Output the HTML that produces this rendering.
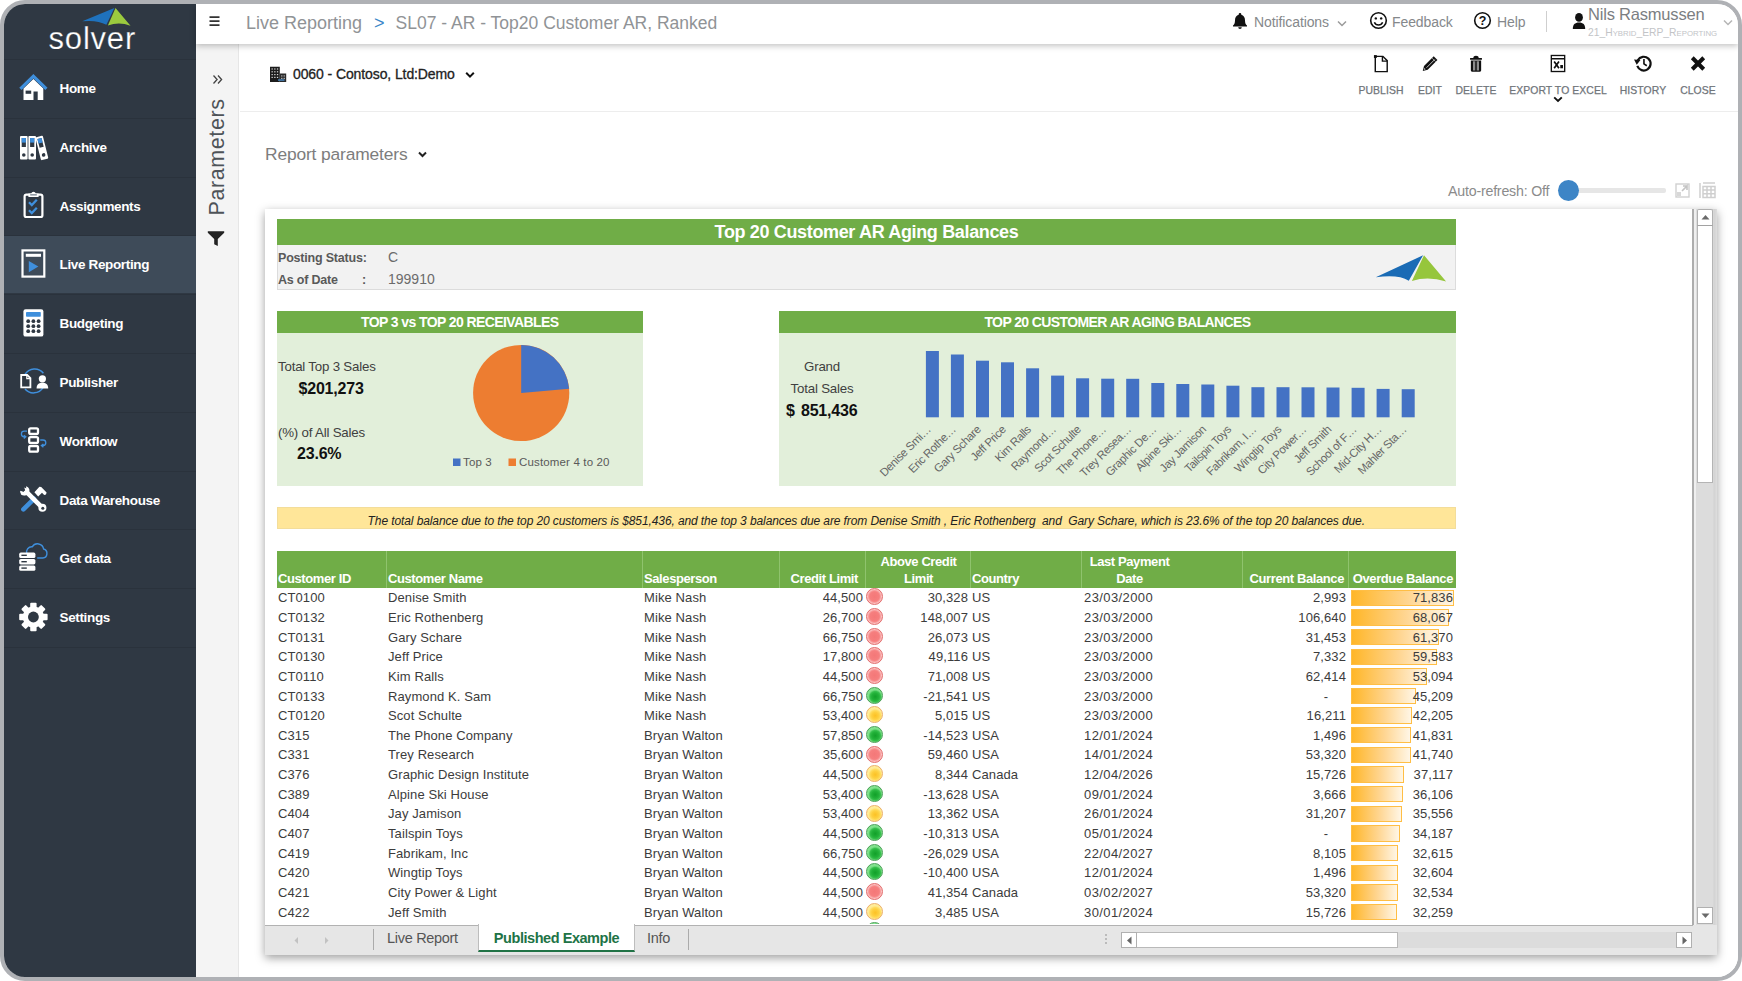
<!DOCTYPE html>
<html lang="en">
<head>
<meta charset="utf-8">
<title>SL07 - AR - Top20 Customer AR, Ranked</title>
<style>
*{box-sizing:border-box;margin:0;padding:0}
html,body{width:1742px;height:981px;overflow:hidden;background:#fff}
body{font-family:"Liberation Sans",sans-serif;position:relative}
#frame{position:absolute;left:0;top:0;width:1742px;height:981px;border:4px solid #afb1b5;border-radius:25px;overflow:hidden;background:#fff}
#app{position:absolute;left:-4px;top:-4px;width:1742px;height:981px}
/* everything inside #app uses full-image coordinates */
#side{position:absolute;left:4px;top:4px;width:192px;height:973px;background:#2f3843}
#logo{position:absolute;left:0;top:0;width:192px;height:55px}
.mi{position:absolute;left:0;width:192px;height:58.8px;border-top:1px solid #2a323c;color:#fff;font-weight:bold;font-size:13.5px;letter-spacing:-0.35px}
.mi span{position:absolute;left:55.5px;top:21px;line-height:16px;white-space:nowrap}
.mi svg{position:absolute;left:13px;top:11.500px;width:32px;height:32px}
.mi.act{background:#3e4b59}
#top{position:absolute;left:196px;top:4px;width:1542px;height:39.500px;background:#fff;box-shadow:0 2px 6px rgba(0,0,0,.24);z-index:5}
#crumb{position:absolute;left:50px;top:8.600px;font-size:18px;line-height:20px;color:#909396;white-space:nowrap;letter-spacing:0px}
#crumb b{font-weight:normal;color:#3a86c8;margin:0 11px 0 12px}
.tnav{position:absolute;top:10px;font-size:14px;letter-spacing:-0.1px;line-height:16px;color:#85888b;white-space:nowrap}
#pstrip{position:absolute;left:196px;top:43px;width:43px;height:934px;background:#f4f4f4;border-right:1px solid #e6e6e6}
#main{position:absolute;left:240px;top:43px;width:1498px;height:934px;background:#fff}
#hr1{position:absolute;left:240px;top:111px;width:1498px;height:1px;background:#ededed}
#company{position:absolute;left:293px;top:66px;font-size:14px;line-height:16px;color:#222;white-space:nowrap;letter-spacing:-0.1px;-webkit-text-stroke:0.3px #222}
.tb{position:absolute;top:84.500px;font-size:10.4px;line-height:12px;color:#70757a;-webkit-text-stroke:0.250px #70757a;white-space:nowrap;transform:translateX(-50%);letter-spacing:0.1px}
.tbi{position:absolute;top:52.800px;width:21px;height:21px;transform:translateX(-50%)}
#rp{position:absolute;left:265px;top:144px;font-size:17.4px;line-height:20px;color:#7d7d7d;white-space:nowrap;letter-spacing:-0.15px}
#ar{position:absolute;left:1448px;top:182.5px;font-size:14.2px;line-height:16px;color:#8b8b8b;white-space:nowrap;letter-spacing:-0.2px}
/* spreadsheet */
#sheet{position:absolute;left:264.500px;top:208.500px;width:1452px;height:746.500px;background:#fff;box-shadow:0 3px 9px rgba(0,0,0,.38)}
#tabs{position:absolute;left:264.500px;top:924.500px;width:1452px;height:30.500px;background:#e6e6e6}
#tabs i{position:absolute;left:0;top:0;width:1428px;height:1.300px;background:#b2b2b2}
.cal{font-family:"Liberation Sans",sans-serif}
#title{position:absolute;left:277px;top:218.600px;width:1179px;height:26.300px;background:#70ad47;color:#fff;font-weight:bold;font-size:18px;line-height:26px;text-align:center;letter-spacing:-0.35px}
#info{position:absolute;left:277px;top:245px;width:1179px;height:45px;background:#f2f2f2;border:1px solid #dcdcdc;border-top:none}
.lbl{position:absolute;font-size:12.5px;line-height:14px;color:#595959;font-weight:bold;white-space:nowrap;letter-spacing:-0.2px}
.val{position:absolute;font-size:14px;line-height:16px;color:#6b6b6b;white-space:nowrap;letter-spacing:0px}
.ph{position:absolute;height:22px;background:#70ad47;color:#fff;font-weight:bold;font-size:14px;line-height:22px;text-align:center;letter-spacing:-0.6px}
.pb{position:absolute;background:#e2efda}
.t13{position:absolute;font-size:13.3px;line-height:15px;color:#404040;white-space:nowrap;letter-spacing:-0.2px}
.t15b{position:absolute;font-size:16px;line-height:18px;color:#111;font-weight:bold;white-space:nowrap;letter-spacing:-0.2px}
#note{position:absolute;left:276.500px;top:507.300px;width:1179.500px;height:22px;background:#ffe699;border:1px solid #f3dd9a;font-style:italic;font-size:12px;line-height:26.500px;color:#222;text-align:center;white-space:nowrap;letter-spacing:-0.1px}
#thead{position:absolute;left:276.500px;top:551px;width:1179.500px;height:37px;background:#70ad47}
.th{margin-left:.5px;position:absolute;color:#fff;font-weight:bold;font-size:13px;line-height:17px;white-space:nowrap;letter-spacing:-0.4px}
.vs{margin-left:.5px;position:absolute;top:0;width:1px;height:37px;background:#8fc36d}
.tr{position:absolute;left:0;width:1742px;height:19.6px}
.c{position:absolute;top:2px;font-size:13px;line-height:16px;color:#3c3c3c;white-space:nowrap;letter-spacing:0.1px}
.n{letter-spacing:0.1px}
.d{letter-spacing:0.4px}
.ra{text-align:right}
.dot{position:absolute;left:866.400px;top:0.200px;width:17px;height:17px;border-radius:50%;border:1.400px solid #999}
.dot.r{background:radial-gradient(circle 8px at 50% 50%,#f47878 0,#f67f7f 60%,#f89a9a 74%,#fcc2c2 88%,#fbb8b8 100%);border-color:#e26c6c}
.dot.g{background:radial-gradient(circle 8px at 55% 58%,#12a029 0,#22b139 45%,#36c04c 66%,#7ade86 84%,#86e592 100%);border-color:#4b9f57}
.dot.y{background:radial-gradient(circle 8px at 55% 58%,#fcc124 0,#fed040 45%,#ffdc5e 66%,#ffea94 84%,#ffee9c 100%);border-color:#ecae68}
.dbar{position:absolute;left:1351px;top:1.300px;height:16.400px;background:linear-gradient(90deg,#ffb628 0%,#ffd590 55%,#fff6e6 100%);border:1px solid #ffbe45}
</style>
</head>
<body>
<div id="frame"><div id="app">

<!-- ============ main area ============ -->
<div id="main"></div>
<div id="pstrip"></div>
<div id="hr1"></div>

<!-- ============ sidebar ============ -->
<div id="side">
<div id="logo">
<svg width="192" height="55" viewBox="0 0 192 55">
<path d="M78.300 17.300L110.400 3.900L102.400 20.800Q93 15.600 78.300 17.300Z" fill="#1f72bd"/>
<path d="M111.500 3.900L126.500 21.800Q115 17.400 103.900 21.600Z" fill="#9bca3e"/>
<text x="88.300" y="45.200" text-anchor="middle" font-family="'Liberation Sans',sans-serif" font-size="31" fill="#fff" letter-spacing="0.800" stroke="#2f3843" stroke-width="0.250">solver</text>
</svg>
</div>
<div class="mi" style="top:55px"><svg viewBox="0 0 32 32"><path d="M6.500 16.600L16.400 7l9.900 9.600V28h-5.600v-8.400h-4.200V28H6.500z" fill="#fff"/><path d="M3.400 16.900L16.400 4.200l13 12.700" stroke="#3f8fdc" stroke-width="3.200" fill="none"/><rect x="8.600" y="18.600" width="5.600" height="3.200" fill="#2f3843"/></svg><span>Home</span></div>
<div class="mi" style="top:113.8px"><svg viewBox="0 0 32 32" style="left:14px;top:12px"><rect x="2" y="5" width="7.600" height="23.600" rx="1" fill="#fff"/><rect x="10.400" y="5" width="7.600" height="23.600" rx="1" fill="#fff"/><rect x="20" y="5.200" width="7.600" height="23.600" rx="1" fill="#fff" transform="rotate(-14 23.700 16.700)"/><rect x="3.700" y="7" width="4.200" height="9" fill="#2f3843"/><rect x="12.100" y="7" width="4.200" height="9" fill="#2f3843"/><rect x="3.700" y="7" width="4.200" height="4.600" fill="#3f8fdc"/><rect x="12.100" y="7" width="4.200" height="4.600" fill="#3f8fdc"/><circle cx="5.800" cy="24" r="1.800" fill="#2f3843"/><circle cx="14.200" cy="24" r="1.800" fill="#2f3843"/><g transform="rotate(-14 23.700 16.700)"><rect x="21.700" y="7.200" width="4.200" height="9" fill="#2f3843"/><rect x="21.700" y="7.200" width="4.200" height="4.600" fill="#3f8fdc"/><circle cx="23.800" cy="24.200" r="1.800" fill="#2f3843"/></g></svg><span>Archive</span></div>
<div class="mi" style="top:172.6px"><svg viewBox="0 0 32 32"><rect x="7.600" y="5.600" width="17.800" height="22.400" rx="1.800" fill="none" stroke="#fff" stroke-width="2.200"/><path d="M11.400 8V4.400h2.800a2.400 2.400 0 0 1 4.600 0h2.800V8z" fill="#fff"/><rect x="13.200" y="5.200" width="6.600" height="1.300" fill="#7a8591"/><path d="M12 13.200l2.800 2.800 5-5.200M12 21.200l2.800 2.800 5-5.200" stroke="#3f8fdc" stroke-width="2.300" fill="none"/></svg><span>Assignments</span></div>
<div class="mi act" style="top:231.4px;height:57.400px"><svg viewBox="0 0 32 32" style="top:11px"><rect x="5.500" y="3.400" width="21.800" height="26.200" fill="none" stroke="#fff" stroke-width="2.200"/><rect x="8.800" y="6.800" width="15.200" height="3" fill="#fff"/><path d="M11.800 14l9.600 5.600-9.600 5.600z" fill="#3f8fdc"/></svg><span>Live Reporting</span></div>
<div class="mi" style="top:290.2px"><svg viewBox="0 0 32 32" style="top:11px"><rect x="6.400" y="3.200" width="20" height="27.400" rx="2.200" fill="#fff"/><rect x="9" y="6" width="14.800" height="4.800" rx=".8" fill="#3f8fdc"/><g fill="#2f3843"><circle cx="11.200" cy="15.200" r="1.900"/><circle cx="16.400" cy="15.200" r="1.900"/><circle cx="21.600" cy="15.200" r="1.900"/><circle cx="11.200" cy="20.200" r="1.900"/><circle cx="16.400" cy="20.200" r="1.900"/><circle cx="21.600" cy="20.200" r="1.900"/><circle cx="11.200" cy="25.200" r="1.900"/><circle cx="16.400" cy="25.200" r="1.900"/><circle cx="21.600" cy="25.200" r="1.900"/></g></svg><span>Budgeting</span></div>
<div class="mi" style="top:349px"><svg viewBox="0 0 32 32" style="top:10.500px;left:13.500px"><path d="M7 9.400a11.200 11.200 0 0 1 18.400-1.200M25 22.600a11.200 11.200 0 0 1-18 1.400" stroke="#3f8fdc" stroke-width="1.500" fill="none"/><path d="M3.200 10h6l3.200 3.200v9.200H3.200z" fill="#2f3843" stroke="#fff" stroke-width="1.800"/><path d="M8.800 10v3.600h3.600" fill="none" stroke="#fff" stroke-width="1.200"/><circle cx="24.400" cy="13.800" r="3.600" fill="#fff"/><path d="M18.600 23.400c0-4.200 2.400-5.600 5.800-5.600s5.800 1.400 5.800 5.600z" fill="#fff"/></svg><span>Publisher</span></div>
<div class="mi" style="top:407.8px"><svg viewBox="0 0 32 32"><g fill="none" stroke="#fff" stroke-width="2.300"><rect x="12.200" y="4.400" width="8.800" height="5.600" rx="1.400"/><rect x="12.200" y="13.200" width="8.800" height="5.600" rx="1.400"/><rect x="12.200" y="22" width="8.800" height="5.600" rx="1.400"/></g><path d="M10 7.200H7.200a2.800 2.800 0 0 0 0 5.600h1.400M6.800 11.200l2 1.600-2 1.600M23.200 16H26a2.800 2.800 0 0 1 0 5.600h-1.400M26.400 20l-2 1.600 2 1.600" stroke="#3f8fdc" stroke-width="1.300" fill="none"/></svg><span>Workflow</span></div>
<div class="mi" style="top:466.600px"><svg viewBox="0 0 32 32"><path d="M6.400 26.400L17 15.800" stroke="#3f8fdc" stroke-width="4.600" stroke-linecap="round"/><path d="M17.400 9.200l5-5.400 1.800.2 5.400 5.400-.6 2.200-1.800.4-2.200-2.200-3.800 3.800z" fill="#fff"/><path d="M9.400 8.800L24 23.400" stroke="#fff" stroke-width="4.600"/><circle cx="25.400" cy="24.800" r="4" fill="#fff"/><circle cx="25.800" cy="25.200" r="1.500" fill="#2f3843"/><path d="M11.600 6.200A5 5 0 0 1 4 11.400l-.6-3.200 2.800 1 2-2-1-2.800z" fill="#fff"/><circle cx="7.600" cy="7.600" r="4" fill="none"/><path d="M3.200 7.800a4.600 4.600 0 0 0 8.400 2.600 4.600 4.600 0 0 0-2.600-7.200l.4 3.400-2.600 2.400z" fill="#fff"/></svg><span>Data Warehouse</span></div>
<div class="mi" style="top:525.400px"><svg viewBox="0 0 32 32"><path d="M9.800 11.600a5.200 5.200 0 0 1 5.400-6.800 6.200 6.200 0 0 1 11.400 2.200 4.600 4.600 0 0 1-.8 9h-5.600" stroke="#3f8fdc" stroke-width="1.400" fill="none"/><g fill="#fff"><rect x="2.200" y="10.600" width="16.200" height="5.400" rx="1.600"/><rect x="2.200" y="17" width="16.200" height="5.400" rx="1.600"/><rect x="2.200" y="23.400" width="16.200" height="5.400" rx="1.600"/></g><g fill="#2f3843"><rect x="4.400" y="12.600" width="5.400" height="1.400"/><rect x="4.400" y="19" width="5.400" height="1.400"/><rect x="4.400" y="25.400" width="5.400" height="1.400"/></g></svg><span>Get data</span></div>
<div class="mi" style="top:584.200px"><svg viewBox="0 0 32 32" style="top:12px"><g transform="translate(16.400 16)"><g fill="#fff"><rect x="-3.200" y="-14.200" width="6.400" height="28.400" rx="1"/><rect x="-3.200" y="-14.200" width="6.400" height="28.400" rx="1" transform="rotate(45)"/><rect x="-3.200" y="-14.200" width="6.400" height="28.400" rx="1" transform="rotate(90)"/><rect x="-3.200" y="-14.200" width="6.400" height="28.400" rx="1" transform="rotate(135)"/><circle r="10.600"/></g><circle r="5.400" fill="#2f3843"/></g></svg><span>Settings</span></div>
<div class="mi" style="top:643px;height:1px"></div>

</div>

<!-- ============ top bar ============ -->
<div id="top">
<svg style="position:absolute;left:13px;top:12px" width="12" height="11" viewBox="0 0 12 11"><path d="M0.5 1.2h10M0.5 5.2h10M0.5 9.2h10" stroke="#333" stroke-width="1.8"/></svg>
<div id="crumb">Live Reporting<b>&gt;</b><span style="font-size:17.500px">SL07 - AR - Top20 Customer AR, Ranked</span></div>
<svg style="position:absolute;left:1036px;top:8px" width="16" height="18" viewBox="0 0 16 18"><path d="M8 1.000a1.300 1.300 0 0 1 1.300 1.300v.5c2.400.7 3.700 2.700 3.700 5.400 0 3 .8 4.300 2 5.400v.9H1v-.9c1.200-1.100 2-2.400 2-5.400 0-2.700 1.300-4.700 3.700-5.400v-.5A1.300 1.300 0 0 1 8 1zM6.200 15.300h3.600a1.800 1.800 0 0 1-3.600 0z" fill="#111"/></svg>
<div class="tnav" style="left:1058px">Notifications</div>
<svg style="position:absolute;left:1141px;top:16px" width="10" height="7" viewBox="0 0 10 7"><path d="M1 1.500l4 4 4-4" stroke="#9a9a9a" stroke-width="1.500" fill="none"/></svg>
<svg style="position:absolute;left:1173px;top:7px" width="19" height="19" viewBox="0 0 19 19"><circle cx="9.500" cy="9.500" r="7.800" fill="none" stroke="#111" stroke-width="1.600"/><circle cx="6.800" cy="7.400" r="1.200" fill="#111"/><circle cx="12.200" cy="7.400" r="1.200" fill="#111"/><path d="M5.400 11.200a4.400 4.400 0 0 0 8.200 0" stroke="#111" stroke-width="1.500" fill="none"/></svg>
<div class="tnav" style="left:1196px">Feedback</div>
<svg style="position:absolute;left:1277px;top:7px" width="19" height="19" viewBox="0 0 19 19"><circle cx="9.500" cy="9.500" r="7.800" fill="none" stroke="#111" stroke-width="1.600"/><text x="9.500" y="14" text-anchor="middle" font-family="'Liberation Sans',sans-serif" font-weight="bold" font-size="12.500" fill="#111">?</text></svg>
<div class="tnav" style="left:1301px">Help</div>
<div style="position:absolute;left:1350px;top:7px;width:1px;height:21px;background:#cfcfcf"></div>
<svg style="position:absolute;left:1376px;top:8px" width="14" height="18" viewBox="0 0 14 18"><ellipse cx="7" cy="5.400" rx="3.900" ry="4.400" fill="#111"/><path d="M.8 17c0-4.600 2-6.600 6.200-6.600s6.200 2 6.200 6.600z" fill="#111"/></svg>
<div style="position:absolute;left:1392px;top:0.300px;font-size:16.5px;line-height:20px;color:#7b7e82;white-space:nowrap;letter-spacing:-0.2px">Nils Rasmussen</div>
<div style="position:absolute;left:1392px;top:22.5px;font-size:10.3px;line-height:12px;color:#c2c4c7;white-space:nowrap;letter-spacing:0px">21_H<span style="font-size:7.800px">YBRID</span>_ERP_R<span style="font-size:7.800px">EPORTING</span></div>
<svg style="position:absolute;left:1527px;top:15px" width="10" height="7" viewBox="0 0 10 7"><path d="M1 1.500l4 4 4-4" stroke="#b5b5b5" stroke-width="1.500" fill="none"/></svg>

</div>

<!-- ============ parameters strip ============ -->
<svg style="position:absolute;left:212px;top:74px" width="11" height="11" viewBox="0 0 11 11"><path d="M1.500 1.500l3.600 4-3.600 4M6 1.500l3.600 4-3.600 4" stroke="#444" stroke-width="1.300" fill="none"/></svg>
<div style="position:absolute;left:217px;top:157px;width:0;height:0"><div style="position:absolute;left:0;top:0;transform:translate(-50%,-50%) rotate(-90deg);font-size:21.500px;line-height:24px;color:#4e5358;white-space:nowrap;letter-spacing:0.600px">Parameters</div></div>
<svg style="position:absolute;left:207px;top:230px" width="18" height="17" viewBox="0 0 18 17"><path d="M.8 1.200h16.400v1.600L10.800 9v7l-3.600-1.800V9L.8 2.800z" fill="#222"/></svg>


<!-- ============ company + toolbar ============ -->
<svg style="position:absolute;left:269px;top:66px" width="18" height="17" viewBox="0 0 18 17"><path d="M1 0.800h9.800V16H1z" fill="#1c1c1c"/><path d="M10.800 7.600h6.400V16h-6.400z" fill="#2a2a2a"/><g fill="#d8d8d8"><rect x="2.500" y="2.400" width="1.300" height="1.200"/><rect x="5.200" y="2.400" width="1.300" height="1.200"/><rect x="7.900" y="2.400" width="1.300" height="1.200"/><rect x="2.500" y="5.200" width="1.300" height="1.200"/><rect x="5.200" y="5.200" width="1.300" height="1.200"/><rect x="7.900" y="5.200" width="1.300" height="1.200"/><rect x="2.500" y="8" width="1.300" height="1.200"/><rect x="5.200" y="8" width="1.300" height="1.200"/><rect x="7.900" y="8" width="1.300" height="1.200"/><rect x="2.500" y="10.800" width="1.300" height="1.200"/><rect x="5.200" y="10.800" width="1.300" height="1.200"/><rect x="7.900" y="10.800" width="1.300" height="1.200"/><rect x="12.200" y="9.400" width="1.200" height="1.100"/><rect x="14.600" y="9.400" width="1.200" height="1.100"/><rect x="12.200" y="11.800" width="1.200" height="1.100"/><rect x="14.600" y="11.800" width="1.200" height="1.100"/></g><rect x="9" y="13.400" width="6.500" height="1.300" fill="#4a90d0"/></svg>
<div id="company">0060 - Contoso, Ltd:Demo</div>
<svg style="position:absolute;left:465px;top:71px" width="10" height="8" viewBox="0 0 10 8"><path d="M1.200 1.800l3.800 3.800 3.800-3.800" stroke="#111" stroke-width="2" fill="none"/></svg>

<svg class="tbi" style="left:1381px" viewBox="0 0 22 22"><path d="M5 3.500h8l4.500 4.500V19.500H5z" fill="none" stroke="#111" stroke-width="1.500"/><path d="M12.500 3.500V8.500H17.500" fill="none" stroke="#111" stroke-width="1.500"/><rect x="3.600" y="2.200" width="3" height="3" fill="#111"/></svg>
<div class="tb" style="left:1381px">PUBLISH</div>
<svg class="tbi" style="left:1430px" viewBox="0 0 22 22"><path d="M3.400 18.800l1.300-5.200L14.900 3.400l3.900 3.900L8.600 17.500z" fill="#111"/><path d="M7.400 15.400l8.600-8.600" stroke="#fff" stroke-width=".8"/><path d="M4.700 17.500l.5-1.700 1.200 1.200z" fill="#fff"/><path d="M13.200 5.400l3.600 3.600" stroke="#fff" stroke-width=".6"/></svg>
<div class="tb" style="left:1430px">EDIT</div>
<svg class="tbi" style="left:1476px" viewBox="0 0 22 22"><path d="M4.800 5.200h12.400v1.900H4.800z" fill="#111"/><path d="M8.200 5.200c0-1.700 1-2.400 2.800-2.400s2.800.7 2.800 2.400z" fill="#111"/><path d="M5.600 7.800h10.800v10.600a1.200 1.200 0 0 1-1.200 1.200H6.800a1.200 1.200 0 0 1-1.200-1.200z" fill="#111"/><path d="M8.900 8.600v9.800M13.100 8.600v9.800" stroke="#fff" stroke-width="1.100"/><path d="M11 8.600v9.800" stroke="#777" stroke-width=".7"/></svg>
<div class="tb" style="left:1476px">DELETE</div>
<svg class="tbi" style="left:1558px" viewBox="0 0 22 22"><rect x="4" y="2.600" width="14" height="16.800" fill="none" stroke="#111" stroke-width="1.400"/><path d="M4 6h14" stroke="#111" stroke-width="1.400"/><path d="M7 9l5 7M12 9l-5 7" stroke="#111" stroke-width="1.800"/><rect x="13.400" y="12.600" width="2.800" height="3.400" fill="#111"/></svg>
<div class="tb" style="left:1558px">EXPORT TO EXCEL</div>
<svg style="position:absolute;left:1553px;top:96px" width="10" height="7" viewBox="0 0 10 7"><path d="M1.200 1.400l3.800 3.600 3.800-3.600" stroke="#111" stroke-width="1.900" fill="none"/></svg>
<svg class="tbi" style="left:1643px" viewBox="0 0 22 22"><path d="M5 13.600a7.200 7.200 0 1 0 .5-6" fill="none" stroke="#111" stroke-width="2.300"/><path d="M1.600 6.800l6.800.6-4 5z" fill="#111"/><path d="M12 6.400v5l3 1.900" stroke="#111" stroke-width="1.700" fill="none"/></svg>
<div class="tb" style="left:1643px">HISTORY</div>
<svg class="tbi" style="left:1698px" viewBox="0 0 22 22"><path d="M5 5l12 12M17 5L5 17" stroke="#111" stroke-width="4.200"/></svg>
<div class="tb" style="left:1698px">CLOSE</div>


<div id="rp">Report parameters <svg width="9" height="7" viewBox="0 0 9 7" style="margin-left:5.500px;vertical-align:2px"><path d="M1 1.5l3.5 3.5 3.5-3.5" stroke="#222" stroke-width="2" fill="none"/></svg></div>
<div id="ar">Auto-refresh: Off</div>
<div style="position:absolute;left:1568px;top:188px;width:98px;height:4.500px;background:#e6e6e6;border-radius:2px"></div>
<div style="position:absolute;left:1557.5px;top:179.5px;width:21px;height:21px;border-radius:50%;background:#3d85c6"></div>
<svg style="position:absolute;left:1675px;top:183px" width="15" height="15" viewBox="0 0 15 15"><rect x="1" y="1" width="13" height="13" fill="none" stroke="#d0d0d0" stroke-width="1.4"/><path d="M7 8l5-5v4M12 3h-4" stroke="#c4c4c4" stroke-width="1.6" fill="none"/><rect x="2" y="9" width="4" height="4" fill="#d8d8d8"/></svg>
<svg style="position:absolute;left:1699px;top:182px" width="17" height="17" viewBox="0 0 17 17"><path d="M1 1v15M4 1h12M4 4.5h12v11h-12zM4 8h12M4 11.7h12M8 4.5v11M12 4.5v11" stroke="#cfcfcf" stroke-width="1.5" fill="none"/></svg>

<!-- ============ spreadsheet ============ -->
<div id="sheet"></div>
<!-- vertical scrollbar -->
<div style="position:absolute;left:1692.300px;top:209px;width:1.600px;height:716px;background:#adadad"></div>
<div style="position:absolute;left:1694px;top:209px;width:19.500px;height:716px;background:#efefef"></div>
<div style="position:absolute;left:1696px;top:209px;width:20.500px;height:716px;background:linear-gradient(90deg,#dcdcdc 0,#dcdcdc 17px,#d2d2d2 18px,#dedede 100%)"></div>
<div style="position:absolute;left:1697px;top:225px;width:16px;height:257.500px;background:#fff;border:1px solid #b4b4b4;border-top:none"></div>
<div style="position:absolute;left:1697px;top:209px;width:16px;height:16.500px;background:#fff;border:1px solid #b0b0b0;border-bottom:1.500px solid #a2a2a2;border-radius:2px 2px 0 0"></div>
<svg style="position:absolute;left:1700.500px;top:214px" width="9" height="6" viewBox="0 0 9 6"><path d="M0.500 5.500L4.500 1l4 4.500z" fill="#6a6a6a"/></svg>
<div style="position:absolute;left:1697px;top:907px;width:16px;height:16.500px;background:#fff;border:1px solid #b0b0b0"></div>
<svg style="position:absolute;left:1700.500px;top:912.500px" width="9" height="6" viewBox="0 0 9 6"><path d="M0.500 0.500L4.500 5l4-4.500z" fill="#6a6a6a"/></svg>

<!-- report title + info -->
<div id="title">Top 20 Customer AR Aging Balances</div>
<div id="info"></div>
<div class="lbl" style="left:278px;top:251px">Posting Status:</div>
<div class="val" style="left:388px;top:249px">C</div>
<div class="lbl" style="left:278px;top:273px">As of Date</div>
<div class="lbl" style="left:362px;top:273px">:</div>
<div class="val" style="left:388px;top:271px">199910</div>
<svg style="position:absolute;left:0;top:0" width="1742" height="300" viewBox="0 0 1742 300"><path d="M1375.800 277.300L1423.100 255.200L1408.800 280.700Q1398 274 1375.800 277.300Z" fill="#1a6bb5"/><path d="M1424 255.200L1446.100 281.600Q1428.500 275.600 1411.900 280.900Z" fill="#96c63c"/></svg>

<!-- left panel -->
<div class="pb" style="left:779px;top:311px;width:677px;height:175px"></div>
<div class="pb" style="left:276.500px;top:311px;width:366.500px;height:175px"></div>
<div class="ph" style="left:276.500px;top:311px;width:366.500px">TOP 3 vs TOP 20 RECEIVABLES</div>
<div class="t13" style="left:278px;top:359px">Total Top 3 Sales</div>
<div class="t15b" style="left:298.500px;top:380px">$201,273</div>
<div class="t13" style="left:278px;top:425px">(%) of All Sales</div>
<div class="t15b" style="left:297px;top:445px">23.6%</div>
<svg style="position:absolute;left:0;top:0;pointer-events:none" width="1742" height="981" viewBox="0 0 1742 981">
<circle cx="521.2" cy="393.0" r="48.1" fill="#ed7d31"/><path d="M521.2,393.0 L521.2,344.9 A48.1,48.1 0 0 1 569.12,388.81 Z" fill="#4472c4"/>
<rect x="453" y="458.500" width="7.500" height="7.500" fill="#4472c4"/><rect x="508.500" y="458.500" width="7.500" height="7.500" fill="#ed7d31"/>
<g font-family="'Liberation Sans',sans-serif" font-size="11.500" fill="#595959" letter-spacing="0.150"><text x="463" y="466.300">Top 3</text><text x="519" y="466.300">Customer 4 to 20</text></g>
<g fill="#4472c4"><rect x="925.9" y="351.0" width="13" height="66.3"/><rect x="950.9" y="354.5" width="13" height="62.8"/><rect x="976.0" y="360.7" width="13" height="56.6"/><rect x="1001.0" y="362.3" width="13" height="55.0"/><rect x="1026.1" y="368.3" width="13" height="49.0"/><rect x="1051.1" y="375.6" width="13" height="41.7"/><rect x="1076.1" y="378.3" width="13" height="39.0"/><rect x="1101.2" y="378.7" width="13" height="38.6"/><rect x="1126.2" y="378.8" width="13" height="38.5"/><rect x="1151.3" y="383.0" width="13" height="34.3"/><rect x="1176.3" y="384.0" width="13" height="33.3"/><rect x="1201.3" y="384.5" width="13" height="32.8"/><rect x="1226.4" y="385.7" width="13" height="31.6"/><rect x="1251.4" y="387.2" width="13" height="30.1"/><rect x="1276.5" y="387.2" width="13" height="30.1"/><rect x="1301.5" y="387.3" width="13" height="30.0"/><rect x="1326.5" y="387.5" width="13" height="29.8"/><rect x="1351.6" y="387.8" width="13" height="29.5"/><rect x="1376.6" y="388.9" width="13" height="28.4"/><rect x="1401.7" y="389.2" width="13" height="28.1"/></g>
<g font-family="'Liberation Sans',sans-serif" font-size="11.500" fill="#666" letter-spacing="-0.350"><text transform="translate(931.4,430.3) rotate(-45)" text-anchor="end">Denise Smi…</text><text transform="translate(956.4,430.3) rotate(-45)" text-anchor="end">Eric Rothe…</text><text transform="translate(981.5,430.3) rotate(-45)" text-anchor="end">Gary Schare</text><text transform="translate(1006.5,430.3) rotate(-45)" text-anchor="end">Jeff Price</text><text transform="translate(1031.6,430.3) rotate(-45)" text-anchor="end">Kim Ralls</text><text transform="translate(1056.6,430.3) rotate(-45)" text-anchor="end">Raymond…</text><text transform="translate(1081.6,430.3) rotate(-45)" text-anchor="end">Scot Schulte</text><text transform="translate(1106.7,430.3) rotate(-45)" text-anchor="end">The Phone…</text><text transform="translate(1131.7,430.3) rotate(-45)" text-anchor="end">Trey Resea…</text><text transform="translate(1156.8,430.3) rotate(-45)" text-anchor="end">Graphic De…</text><text transform="translate(1181.8,430.3) rotate(-45)" text-anchor="end">Alpine Ski…</text><text transform="translate(1206.8,430.3) rotate(-45)" text-anchor="end">Jay Jamison</text><text transform="translate(1231.9,430.3) rotate(-45)" text-anchor="end">Tailspin Toys</text><text transform="translate(1256.9,430.3) rotate(-45)" text-anchor="end">Fabrikam, I…</text><text transform="translate(1282.0,430.3) rotate(-45)" text-anchor="end">Wingtip Toys</text><text transform="translate(1307.0,430.3) rotate(-45)" text-anchor="end">City Power…</text><text transform="translate(1332.0,430.3) rotate(-45)" text-anchor="end">Jeff Smith</text><text transform="translate(1357.1,430.3) rotate(-45)" text-anchor="end">School of F…</text><text transform="translate(1382.1,430.3) rotate(-45)" text-anchor="end">Mid-City H…</text><text transform="translate(1407.2,430.3) rotate(-45)" text-anchor="end">Mahler Sta…</text></g>
</svg>

<!-- right panel -->
<div class="ph" style="left:779px;top:311px;width:677px">TOP 20 CUSTOMER AR AGING BALANCES</div>
<div class="t13" style="left:779px;top:359px;width:86px;text-align:center">Grand</div>
<div class="t13" style="left:779px;top:381px;width:86px;text-align:center">Total Sales</div>
<div class="t15b" style="left:786px;top:401.500px;word-spacing:2px">$ 851,436</div>

<div id="note">The total balance due to the top 20 customers is $851,436, and the top 3 balances due are from Denise Smith , Eric Rothenberg&nbsp; and&nbsp; Gary Schare, which is 23.6% of the top 20 balances due.</div>

<!-- table header -->
<div id="thead">
<i class="vs" style="left:109px"></i><i class="vs" style="left:365px"></i><i class="vs" style="left:502px"></i><i class="vs" style="left:588px"></i><i class="vs" style="left:693px"></i><i class="vs" style="left:804px"></i><i class="vs" style="left:965px"></i><i class="vs" style="left:1071px"></i>
<div class="th" style="left:1px;top:19px">Customer ID</div>
<div class="th" style="left:111px;top:19px">Customer Name</div>
<div class="th" style="left:367px;top:19px">Salesperson</div>
<div class="th" style="right:598px;top:19px">Credit Limit</div>
<div class="th" style="left:589px;top:2px;width:105px;text-align:center">Above Credit<br>Limit</div>
<div class="th" style="left:695px;top:19px">Country</div>
<div class="th" style="left:806px;top:2px;width:93px;text-align:center">Last Payment<br>Date</div>
<div class="th" style="right:112px;top:19px">Current Balance</div>
<div class="th" style="right:3px;top:19px">Overdue Balance</div>
</div>

<!-- rows -->
<div id="rows" style="position:absolute;left:0;top:0;width:1742px;height:924px;overflow:hidden">
<div class="tr" style="top:588.30px">
<span class="c" style="left:278px">CT0100</span><span class="c" style="left:388px">Denise Smith</span><span class="c" style="left:644px">Mike Nash</span>
<span class="c ra n" style="right:879px">44,500</span><i class="dot r"></i><span class="c ra n" style="right:774px">30,328</span><span class="c" style="left:972px">US</span>
<span class="c d" style="left:1084px">23/03/2000</span><span class="c ra" style="right:396px">2,993</span>
<b class="dbar" style="width:103.2px"></b><span class="c ra" style="right:289px">71,836</span></div>
<div class="tr" style="top:607.94px">
<span class="c" style="left:278px">CT0132</span><span class="c" style="left:388px">Eric Rothenberg</span><span class="c" style="left:644px">Mike Nash</span>
<span class="c ra n" style="right:879px">26,700</span><i class="dot r"></i><span class="c ra n" style="right:774px">148,007</span><span class="c" style="left:972px">US</span>
<span class="c d" style="left:1084px">23/03/2000</span><span class="c ra" style="right:396px">106,640</span>
<b class="dbar" style="width:97.8px"></b><span class="c ra" style="right:289px">68,067</span></div>
<div class="tr" style="top:627.58px">
<span class="c" style="left:278px">CT0131</span><span class="c" style="left:388px">Gary Schare</span><span class="c" style="left:644px">Mike Nash</span>
<span class="c ra n" style="right:879px">66,750</span><i class="dot r"></i><span class="c ra n" style="right:774px">26,073</span><span class="c" style="left:972px">US</span>
<span class="c d" style="left:1084px">23/03/2000</span><span class="c ra" style="right:396px">31,453</span>
<b class="dbar" style="width:88.2px"></b><span class="c ra" style="right:289px">61,370</span></div>
<div class="tr" style="top:647.22px">
<span class="c" style="left:278px">CT0130</span><span class="c" style="left:388px">Jeff Price</span><span class="c" style="left:644px">Mike Nash</span>
<span class="c ra n" style="right:879px">17,800</span><i class="dot r"></i><span class="c ra n" style="right:774px">49,116</span><span class="c" style="left:972px">US</span>
<span class="c d" style="left:1084px">23/03/2000</span><span class="c ra" style="right:396px">7,332</span>
<b class="dbar" style="width:85.6px"></b><span class="c ra" style="right:289px">59,583</span></div>
<div class="tr" style="top:666.86px">
<span class="c" style="left:278px">CT0110</span><span class="c" style="left:388px">Kim Ralls</span><span class="c" style="left:644px">Mike Nash</span>
<span class="c ra n" style="right:879px">44,500</span><i class="dot r"></i><span class="c ra n" style="right:774px">71,008</span><span class="c" style="left:972px">US</span>
<span class="c d" style="left:1084px">23/03/2000</span><span class="c ra" style="right:396px">62,414</span>
<b class="dbar" style="width:76.3px"></b><span class="c ra" style="right:289px">53,094</span></div>
<div class="tr" style="top:686.50px">
<span class="c" style="left:278px">CT0133</span><span class="c" style="left:388px">Raymond K. Sam</span><span class="c" style="left:644px">Mike Nash</span>
<span class="c ra n" style="right:879px">66,750</span><i class="dot g"></i><span class="c ra n" style="right:774px">-21,541</span><span class="c" style="left:972px">US</span>
<span class="c d" style="left:1084px">23/03/2000</span><span class="c ctr" style="left:1316px;width:20px;text-align:center">-</span>
<b class="dbar" style="width:64.9px"></b><span class="c ra" style="right:289px">45,209</span></div>
<div class="tr" style="top:706.14px">
<span class="c" style="left:278px">CT0120</span><span class="c" style="left:388px">Scot Schulte</span><span class="c" style="left:644px">Mike Nash</span>
<span class="c ra n" style="right:879px">53,400</span><i class="dot y"></i><span class="c ra n" style="right:774px">5,015</span><span class="c" style="left:972px">US</span>
<span class="c d" style="left:1084px">23/03/2000</span><span class="c ra" style="right:396px">16,211</span>
<b class="dbar" style="width:60.6px"></b><span class="c ra" style="right:289px">42,205</span></div>
<div class="tr" style="top:725.78px">
<span class="c" style="left:278px">C315</span><span class="c" style="left:388px">The Phone Company</span><span class="c" style="left:644px">Bryan Walton</span>
<span class="c ra n" style="right:879px">57,850</span><i class="dot g"></i><span class="c ra n" style="right:774px">-14,523</span><span class="c" style="left:972px">USA</span>
<span class="c d" style="left:1084px">12/01/2024</span><span class="c ra" style="right:396px">1,496</span>
<b class="dbar" style="width:60.1px"></b><span class="c ra" style="right:289px">41,831</span></div>
<div class="tr" style="top:745.42px">
<span class="c" style="left:278px">C331</span><span class="c" style="left:388px">Trey Research</span><span class="c" style="left:644px">Bryan Walton</span>
<span class="c ra n" style="right:879px">35,600</span><i class="dot r"></i><span class="c ra n" style="right:774px">59,460</span><span class="c" style="left:972px">USA</span>
<span class="c d" style="left:1084px">14/01/2024</span><span class="c ra" style="right:396px">53,320</span>
<b class="dbar" style="width:60.0px"></b><span class="c ra" style="right:289px">41,740</span></div>
<div class="tr" style="top:765.06px">
<span class="c" style="left:278px">C376</span><span class="c" style="left:388px">Graphic Design Institute</span><span class="c" style="left:644px">Bryan Walton</span>
<span class="c ra n" style="right:879px">44,500</span><i class="dot y"></i><span class="c ra n" style="right:774px">8,344</span><span class="c" style="left:972px">Canada</span>
<span class="c d" style="left:1084px">12/04/2026</span><span class="c ra" style="right:396px">15,726</span>
<b class="dbar" style="width:53.3px"></b><span class="c ra" style="right:289px">37,117</span></div>
<div class="tr" style="top:784.70px">
<span class="c" style="left:278px">C389</span><span class="c" style="left:388px">Alpine Ski House</span><span class="c" style="left:644px">Bryan Walton</span>
<span class="c ra n" style="right:879px">53,400</span><i class="dot g"></i><span class="c ra n" style="right:774px">-13,628</span><span class="c" style="left:972px">USA</span>
<span class="c d" style="left:1084px">09/01/2024</span><span class="c ra" style="right:396px">3,666</span>
<b class="dbar" style="width:51.9px"></b><span class="c ra" style="right:289px">36,106</span></div>
<div class="tr" style="top:804.34px">
<span class="c" style="left:278px">C404</span><span class="c" style="left:388px">Jay Jamison</span><span class="c" style="left:644px">Bryan Walton</span>
<span class="c ra n" style="right:879px">53,400</span><i class="dot y"></i><span class="c ra n" style="right:774px">13,362</span><span class="c" style="left:972px">USA</span>
<span class="c d" style="left:1084px">26/01/2024</span><span class="c ra" style="right:396px">31,207</span>
<b class="dbar" style="width:51.1px"></b><span class="c ra" style="right:289px">35,556</span></div>
<div class="tr" style="top:823.98px">
<span class="c" style="left:278px">C407</span><span class="c" style="left:388px">Tailspin Toys</span><span class="c" style="left:644px">Bryan Walton</span>
<span class="c ra n" style="right:879px">44,500</span><i class="dot g"></i><span class="c ra n" style="right:774px">-10,313</span><span class="c" style="left:972px">USA</span>
<span class="c d" style="left:1084px">05/01/2024</span><span class="c ctr" style="left:1316px;width:20px;text-align:center">-</span>
<b class="dbar" style="width:49.1px"></b><span class="c ra" style="right:289px">34,187</span></div>
<div class="tr" style="top:843.62px">
<span class="c" style="left:278px">C419</span><span class="c" style="left:388px">Fabrikam, Inc</span><span class="c" style="left:644px">Bryan Walton</span>
<span class="c ra n" style="right:879px">66,750</span><i class="dot g"></i><span class="c ra n" style="right:774px">-26,029</span><span class="c" style="left:972px">USA</span>
<span class="c d" style="left:1084px">22/04/2027</span><span class="c ra" style="right:396px">8,105</span>
<b class="dbar" style="width:46.9px"></b><span class="c ra" style="right:289px">32,615</span></div>
<div class="tr" style="top:863.26px">
<span class="c" style="left:278px">C420</span><span class="c" style="left:388px">Wingtip Toys</span><span class="c" style="left:644px">Bryan Walton</span>
<span class="c ra n" style="right:879px">44,500</span><i class="dot g"></i><span class="c ra n" style="right:774px">-10,400</span><span class="c" style="left:972px">USA</span>
<span class="c d" style="left:1084px">12/01/2024</span><span class="c ra" style="right:396px">1,496</span>
<b class="dbar" style="width:46.8px"></b><span class="c ra" style="right:289px">32,604</span></div>
<div class="tr" style="top:882.90px">
<span class="c" style="left:278px">C421</span><span class="c" style="left:388px">City Power &amp; Light</span><span class="c" style="left:644px">Bryan Walton</span>
<span class="c ra n" style="right:879px">44,500</span><i class="dot r"></i><span class="c ra n" style="right:774px">41,354</span><span class="c" style="left:972px">Canada</span>
<span class="c d" style="left:1084px">03/02/2027</span><span class="c ra" style="right:396px">53,320</span>
<b class="dbar" style="width:46.7px"></b><span class="c ra" style="right:289px">32,534</span></div>
<div class="tr" style="top:902.54px">
<span class="c" style="left:278px">C422</span><span class="c" style="left:388px">Jeff Smith</span><span class="c" style="left:644px">Bryan Walton</span>
<span class="c ra n" style="right:879px">44,500</span><i class="dot y"></i><span class="c ra n" style="right:774px">3,485</span><span class="c" style="left:972px">USA</span>
<span class="c d" style="left:1084px">30/01/2024</span><span class="c ra" style="right:396px">15,726</span>
<b class="dbar" style="width:46.3px"></b><span class="c ra" style="right:289px">32,259</span></div>
<i class="dot g" style="top:922.200px"></i>
</div>

<!-- sheet tabs -->
<div id="tabs"><i></i></div>
<svg style="position:absolute;left:292px;top:936px" width="40" height="9" viewBox="0 0 40 9"><path d="M6 1L2.500 4.500 6 8z" fill="#c2c2c2"/><path d="M33 1l3.500 3.500L33 8z" fill="#c2c2c2"/></svg>
<div style="position:absolute;left:373px;top:929px;width:1px;height:21px;background:#ababab"></div>
<div style="position:absolute;left:387px;top:929px;font-size:14.500px;line-height:18px;color:#555;white-space:nowrap;letter-spacing:-0.300px">Live Report</div>
<div style="position:absolute;left:478px;top:924px;width:157px;height:28px;background:#fff;border-left:1px solid #bdbdbd;border-right:1px solid #bdbdbd;border-bottom:2px solid #217346"></div>
<div style="position:absolute;left:478px;top:929px;width:157px;text-align:center;font-size:14.500px;font-weight:bold;line-height:18px;color:#217346;white-space:nowrap;letter-spacing:-0.450px">Published Example</div>
<div style="position:absolute;left:647px;top:929px;font-size:14.500px;line-height:18px;color:#555;white-space:nowrap;letter-spacing:-0.300px">Info</div>
<div style="position:absolute;left:688px;top:929px;width:1px;height:21px;background:#ababab"></div>
<!-- horizontal scrollbar -->
<div style="position:absolute;left:1104.500px;top:934px;width:2px;height:12px;background:repeating-linear-gradient(#bbb 0 2px,transparent 2px 4px)"></div>
<div style="position:absolute;left:1121px;top:931.700px;width:16px;height:16px;background:#fff;border:1px solid #b0b0b0"></div>
<svg style="position:absolute;left:1126px;top:935.700px" width="6" height="9" viewBox="0 0 6 9"><path d="M5.500 0.500L1 4.500l4.500 4z" fill="#666"/></svg>
<div style="position:absolute;left:1137px;top:931.700px;width:539px;height:16px;background:#dcdcdc"></div>
<div style="position:absolute;left:1137px;top:931.700px;width:261px;height:16px;background:#fff;border:1px solid #b9b9b9;border-left:none"></div>
<div style="position:absolute;left:1676px;top:931.700px;width:16px;height:16px;background:#fff;border:1px solid #b0b0b0"></div>
<svg style="position:absolute;left:1681.500px;top:935.700px" width="6" height="9" viewBox="0 0 6 9"><path d="M0.500 0.500L5 4.500l-4.500 4z" fill="#666"/></svg>


</div></div>
</body>
</html>
